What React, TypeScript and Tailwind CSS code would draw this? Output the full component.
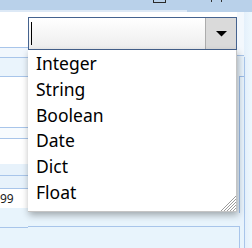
const items = ['Integer', 'String', 'Boolean', 'Date', 'Dict', 'Float']

function Grip() {
  return (
    <svg width="15" height="15" viewBox="0 0 15 15" className="absolute bottom-0 right-0">
      <g stroke="#9c9c9c" strokeWidth="1">
        <line x1="0" y1="15" x2="15" y2="0" />
        <line x1="3" y1="15" x2="15" y2="3" />
        <line x1="6" y1="15" x2="15" y2="6" />
        <line x1="9" y1="15" x2="15" y2="9" />
        <line x1="12" y1="15" x2="15" y2="12" />
      </g>
    </svg>
  )
}

function Combo() {
  return (
    <div className="relative h-[33px] w-[209px]">
      <div className="flex h-full w-full border border-[#45638f] bg-gradient-to-b from-white to-[#ededed]">
        <div className="flex flex-1 items-center pl-[2px]">
          <div className="h-[23px] w-px bg-black" />
        </div>
        <div className="flex w-[31px] items-center justify-center border-l border-[#acacac] bg-[#dadada]">
          <svg width="11" height="6" viewBox="0 0 11 6">
            <polygon points="0,0 11,0 5.5,5.5" fill="#000" />
          </svg>
        </div>
      </div>

      <div className="absolute left-0 top-full z-10 h-[162px] w-[209px] border-b border-r border-[#c4c4c4] bg-white pt-px shadow-[1px_3px_7px_rgba(0,0,0,0.32)]">
        {items.map(item => (
          <div
            key={item}
            className="h-[25.8px] pl-[8px] text-[17.5px] leading-[25.8px] text-black"
          >
            {item}
          </div>
        ))}
        <Grip />
      </div>
    </div>
  )
}

function LeftColumn() {
  return (
    <div className="flex w-[28px] flex-col">
      <div className="h-[35px] bg-white" />
      <div className="h-px bg-[#a8c5ea]" />
      <div className="h-[9px] bg-[#f1f7fd]" />
      <div className="h-px bg-[#a8c5ea]" />
      <div className="h-[18px] bg-[#eaf4fc]" />
      <div className="h-px bg-[#a8c5ea]" />
      <div className="h-[50px] bg-white" />
      <div className="h-px bg-[#a8c5ea]" />
      <div className="h-[10px] bg-[#f7fbfe]" />
      <div className="h-px bg-[#a8c5ea]" />
      <div className="h-[25px] bg-white" />
      <div className="h-[11px] bg-[#e7f2fb]" />
      <div className="h-px bg-[#a8c5ea]" />
      <div className="h-[12px] bg-[#e7f2fb]" />
      <div className="h-px bg-[#a8c5ea]" />
      <div className="flex h-[19px] items-center bg-white text-[12px] text-[#1a1a1a]">
        99
      </div>
      <div className="h-[19px] bg-[#e8f4fc]" />
      <div className="h-px bg-[#a8c5ea]" />
      <div className="flex-1 bg-[#e8f4fc]" />
    </div>
  )
}

function RightColumn() {
  return (
    <div className="flex w-[15px]">
      <div className="flex w-[7px] flex-col">
        <div className="h-[43px] bg-[#f3f8fd]" />
        <div className="flex h-[171px] flex-col border-t border-[#a8c5ea] bg-[#e8f3fc]">
          <div className="ml-[2px] mt-[20px] h-[137px] border-l border-t border-[#9dbde8]" />
        </div>
        <div className="w-[3px] flex-1 border-r border-t border-[#a8c5ea] bg-[#e8f4fc]" />
      </div>
      <div className="flex flex-1 flex-col">
        <div className="h-[45px] bg-gradient-to-r from-[#e4f0fb] to-[#eef8fe]" />
        <div className="flex-1 border-l border-[#a8c5ea] bg-gradient-to-r from-[#e4f0fb] to-[#eef8fe]" />
      </div>
    </div>
  )
}

export default function App() {
  return (
    <div className="flex h-[248px] w-[252px] flex-col overflow-hidden bg-[#e8f4fc] font-['Noto_Sans',sans-serif]">
      <div className="flex h-[10px] bg-[#b9d1ea]">
        <div className="ml-[153px] h-[3px] w-[13px] border-x border-b border-[#2a2a2a]" />
        <div className="ml-[45px] h-[2px] w-px bg-[#333]" />
        <div className="ml-[9px] h-[2px] w-px bg-[#333]" />
      </div>
      <div className="flex h-[2px]">
        <div className="w-[187px] bg-[#dde9f6]" />
        <div className="flex-1 bg-[#b9d1ea]" />
      </div>

      <div className="flex flex-1">
        <LeftColumn />

        <div className="flex w-[209px] flex-col">
          <div className="h-[5px] bg-white" />
          <Combo />
          <div className="h-[176px] bg-[#e8f4fc]" />
          <div className="flex-1 border-t border-[#a8c5ea] bg-[#e8f4fc]" />
        </div>

        <RightColumn />
      </div>
    </div>
  )
}
